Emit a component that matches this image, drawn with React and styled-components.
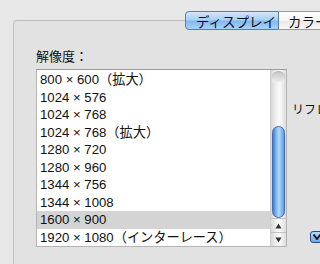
import React from 'react';
import styled, { createGlobalStyle } from 'styled-components';

const Global = createGlobalStyle`
  html, body { margin: 0; padding: 0; background: #e8e8e8; }
  body {
    width: 320px;
    height: 264px;
    overflow: hidden;
    font-family: "Liberation Sans", "Noto Sans CJK JP", sans-serif;
    color: #111;
  }
`;

const resolutions = [
  '800 × 600（拡大）',
  '1024 × 576',
  '1024 × 768',
  '1024 × 768（拡大）',
  '1280 × 720',
  '1280 × 960',
  '1344 × 756',
  '1344 × 1008',
  '1600 × 900',
  '1920 × 1080（インターレース）',
];

const App = () => {
  return (
    <Page>
      <Global />
      <TabBar>
        <Tab selected>ディスプレイ</Tab>
        <Tab>カラー</Tab>
      </TabBar>
      <Panel>
        <Label>解像度：</Label>
        <Content>
          <ListBox>
            <Rows>
              {resolutions.map((r) => (
                <Row key={r} selected={r === '1600 × 900'}>{r}</Row>
              ))}
            </Rows>
            <Scrollbar>
              <Track>
                <TopCap />
                <Thumb />
              </Track>
              <Arrow>
                <svg width="7" height="6" viewBox="0 0 7 6"><path d="M3.5 0.5 L6.5 5.5 L0.5 5.5 Z" fill="#333" /></svg>
              </Arrow>
              <Arrow>
                <svg width="7" height="6" viewBox="0 0 7 6"><path d="M0.5 0.5 L6.5 0.5 L3.5 5.5 Z" fill="#333" /></svg>
              </Arrow>
            </Scrollbar>
          </ListBox>
          <Side>
            <SideLabel>リフレ</SideLabel>
            <Popup>
              <svg width="8" height="6" viewBox="0 0 8 6"><path d="M0.5 0.5 L4 5 L7.5 0.5" stroke="#111" strokeWidth="1.8" fill="none" /></svg>
            </Popup>
          </Side>
        </Content>
      </Panel>
    </Page>
  );
};

const Page = styled.div`
  padding: 11px 0 0 13px;
  width: 320px;
  height: 264px;
  box-sizing: border-box;
  display: flex;
  flex-direction: column;
  overflow: hidden;
`;

const TabBar = styled.div`
  display: flex;
  margin-left: 172px;
  margin-bottom: -10px;
  height: 19px;
  position: relative;
  z-index: 1;
`;

const Tab = styled.div`
  flex: none;
  height: 19px;
  box-sizing: border-box;
  padding: 0 10px 0 ${(p) => (p.selected ? '10px' : '9px')};
  display: flex;
  align-items: center;
  font-size: 13.5px;
  white-space: nowrap;
  color: #111;
  border: 1px solid ${(p) => (p.selected ? '#5b7ea8' : '#9a9a9a')};
  border-left: ${(p) => (p.selected ? '1px solid #5b7ea8' : 'none')};
  border-radius: ${(p) => (p.selected ? '4px 0 0 4px' : '0')};
  background: ${(p) =>
    p.selected
      ? 'linear-gradient(#d2e7fc 0%, #a9d0f6 45%, #84b9ef 55%, #a8d3f8 100%)'
      : 'linear-gradient(#ffffff 0%, #f6f6f6 50%, #e9e9e9 55%, #f8f8f8 100%)'};
  width: ${(p) => (p.selected ? '94px' : 'auto')};
`;

const Panel = styled.div`
  flex: 1;
  background: #e2e2e2;
  border-top: 1px solid #bababa;
  border-left: 1px solid #c2c2c2;
  border-radius: 4px 0 0 0;
  padding: 28px 0 0 22px;
  margin-right: -40px;
`;

const Label = styled.div`
  font-size: 13px;
  line-height: 16px;
  height: 20px;
`;

const Content = styled.div`
  display: flex;
  gap: 5px;
`;

const ListBox = styled.div`
  flex: none;
  width: 251px;
  height: 178px;
  box-sizing: border-box;
  background: #fff;
  border: 1px solid #b4b4b4;
  border-top-color: #9c9c9c;
  display: flex;
`;

const Rows = styled.div`
  flex: 1;
  padding-top: 1px;
`;

const Row = styled.div`
  height: 17.5px;
  line-height: 17.5px;
  padding-left: 3px;
  font-size: 13.2px;
  white-space: nowrap;
  background: ${(p) => (p.selected ? '#d4d4d4' : 'transparent')};
`;

const Scrollbar = styled.div`
  width: 15px;
  display: flex;
  flex-direction: column;
  border-left: 1px solid #cfcfcf;
  background: linear-gradient(90deg, #d8d8d8, #f4f4f4 40%, #fafafa 60%, #dcdcdc);
`;

const Track = styled.div`
  flex: 1;
  display: flex;
  flex-direction: column;
  padding: 1px 1px 0 1px;
`;

const TopCap = styled.div`
  height: 10px;
  border-radius: 7px 7px 0 0;
  border-top: 1px solid #b0b0b0;
  background: linear-gradient(#c8c8c8, #ececec);
  margin-bottom: 44px;
`;

const Thumb = styled.div`
  height: 90px;
  border-radius: 7px;
  border: 1px solid #3f6db3;
  background: linear-gradient(90deg, #3d7fd8 0%, #8ec1f2 35%, #b4d8fa 55%, #5c9be6 100%);
`;

const Arrow = styled.div`
  height: 15px;
  display: flex;
  align-items: center;
  justify-content: center;
  border-top: 1px solid #c4c4c4;
`;

const Side = styled.div`
  flex: none;
  display: flex;
  flex-direction: column;
  padding-top: 33px;
  white-space: nowrap;
`;

const SideLabel = styled.div`
  font-size: 12px;
  line-height: 16px;
`;

const Popup = styled.div`
  margin-top: 113px;
  margin-left: 18px;
  width: 14px;
  height: 12px;
  box-sizing: border-box;
  border: 1px solid #2a4f86;
  border-radius: 3px;
  background: linear-gradient(#b6d6f7, #6ea8ea);
  display: flex;
  align-items: center;
  justify-content: center;
`;

export default App;
